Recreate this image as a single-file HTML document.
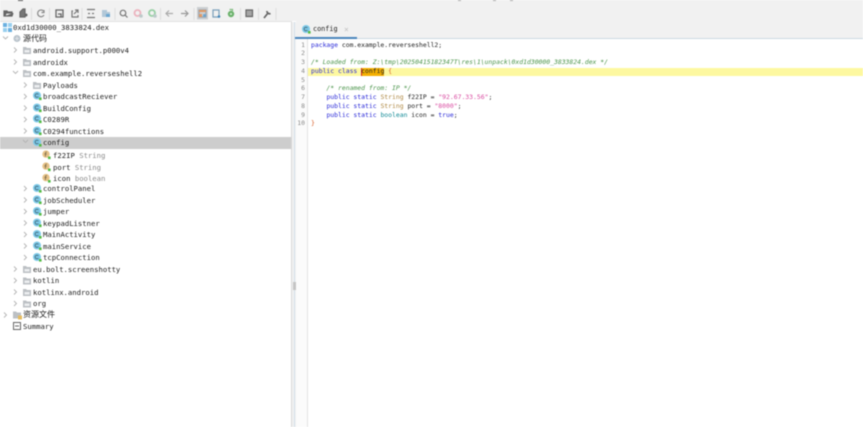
<!DOCTYPE html>
<html><head><meta charset="utf-8"><style>
html,body{margin:0;padding:0;background:#fff}
#p{position:relative;width:863px;height:427px;overflow:hidden;background:#fff;filter:blur(.5px)}
.a{position:absolute}
.t{position:absolute;font:7.25px/11px "DejaVu Sans Mono","Liberation Mono","Noto Sans CJK SC",monospace;color:#222;white-space:pre}
.t i{font-style:normal;color:#8a8a8a}
.c{position:absolute;font:6.42px/8.8px "DejaVu Sans Mono","Liberation Mono",monospace;color:#222;white-space:pre;left:311px}
.n{position:absolute;font:6.4px/8.8px "DejaVu Sans Mono",monospace;color:#888;width:11px;text-align:right;left:294px}
b{font-weight:normal;color:#2a2ad8}
.g{color:#4a944a;font-style:italic}.y{color:#b08a45}.s{color:#d94aa0}.k{color:#128a96}
svg{position:absolute;overflow:visible}
</style></head><body><div id="p">
<div class="a" style="left:0;top:0;width:863px;height:21px;background:#f1f1f1"></div>
<div class="a" style="left:0;top:21px;width:292px;height:1px;background:#e2e2e2"></div>
<div class="a" style="left:0;top:22px;width:291px;height:405px;background:#fff"></div>
<div class="a" style="left:291px;top:22px;width:5px;height:405px;background:#f1f1f1"></div>
<div class="a" style="left:291px;top:22px;width:1px;height:405px;background:#d8d8d8"></div>
<div class="a" style="left:294px;top:22px;width:1px;height:405px;background:#d4e0ea"></div>
<div class="a" style="left:293px;top:282px;width:3px;height:8px;background:#c4c4c4"></div>
<div class="a" style="left:296px;top:21px;width:567px;height:17px;background:#f1f1f1"></div>
<div class="a" style="left:295px;top:37.500px;width:568px;height:1.500px;background:#ccd8e2"></div>
<div class="a" style="left:295px;top:37px;width:62px;height:2px;background:#4a86bc"></div>
<div class="a" style="left:296px;top:39px;width:11px;height:388px;background:#fbfbfb"></div>
<div class="a" style="left:307px;top:39px;width:1px;height:388px;background:#e2e2e2"></div>
<div class="a" style="left:308px;top:67.500px;width:555px;height:8.800px;background:#fdf8a0"></div>
<div class="a" style="left:0;top:137px;width:291px;height:12px;background:#cdcdcd"></div>
<div class="a" style="left:361px;top:67.500px;width:23px;height:8.800px;background:#f5b000"></div>
<div class="a" style="left:361px;top:67.500px;width:1px;height:8.800px;background:#d42020"></div>
<div class="a" style="left:18px;top:0;width:5px;height:1px;background:#555"></div>
<div class="a" style="left:458px;top:0;width:3px;height:1px;background:#aaa"></div>
<div class="a" style="left:493px;top:0;width:3px;height:1px;background:#aaa"></div>
<div class="a" style="left:510px;top:0;width:3px;height:1px;background:#aaa"></div>

<svg width="290" height="21" style="left:0;top:0" fill="none" stroke="#666" stroke-width="1.200">
<path d="M4 16V11h3l1 1h4v1H6l-1 3zM5 16h7l1-3" fill="#666"/>
<path d="M20 17v-5l3-3h2v8z" fill="#777"/><circle cx="26" cy="15" r="1.500" fill="#666" stroke="none"/>
<path d="M43.500 11a3.400 3.400 0 1 0 .5 4M44 10v2.500h-2.500" stroke="#888"/>
<path d="M56 10h7v7h-7zM58 14h3v3" stroke-width="1.300"/>
<path d="M73 11h-1v6h6v-2M75 10h3v3M78 10l-4 4" stroke="#777"/>
<path d="M87 9.500h8M87 17.500h8M88 13.500h2M92 13.500h2" stroke="#777"/>
<path d="M102 10h5v2h3v5h-8z" fill="#b2c8d8" stroke="none"/><path d="M106 14h4v3h-4z" fill="#6ca6d0" stroke="none"/>
<circle cx="123" cy="13" r="2.800" stroke="#777"/><path d="M125 15l2.500 2.500" stroke="#777"/>
<circle cx="137.500" cy="13" r="3" stroke="#ecb3be" stroke-width="1.800"/><circle cx="141" cy="16" r="1.800" fill="#bccaca" stroke="none"/>
<circle cx="152" cy="13" r="3" stroke="#98d0a5" stroke-width="1.800"/><circle cx="155" cy="16" r="1.800" fill="#bccaca" stroke="none"/>
<path d="M166 13.500h7M169 10.500l-3 3 3 3" stroke="#aaa"/><path d="M181 13.500h7M185 10.500l3 3-3 3" stroke="#999"/>
<rect x="197" y="7" width="11" height="12.500" fill="#cbced1" stroke="none"/>
<path d="M199 10h7v7h-7z" stroke="#98a4af"/><path d="M199 10h7v2h-7z" fill="#e09a66" stroke="none"/><path d="M199 14h3v3h-3z" fill="#e09a66" stroke="none"/><circle cx="204.500" cy="15.500" r="1.500" fill="#6ca6d0" stroke="none"/>
<path d="M213 10h6v7h-6z" stroke="#7ba0bb"/><circle cx="219" cy="16.500" r="1.300" fill="#3f84b8" stroke="none"/>
<path d="M229.500 9.500h3v1.500" stroke="#80bc80"/><circle cx="231" cy="14" r="3.200" fill="#6cb26c" stroke="none"/><circle cx="231" cy="14" r="1" fill="#d8ecd8" stroke="none"/>
<path d="M246 10h6.500v6.500H246z" fill="#a5a5a5" stroke="#666"/>
<path d="M264 18l4-5M267 11a2.500 2.500 0 0 0 3.500 2.500" stroke="#666" stroke-width="1.700"/>
<path d="M31.500 8v12M49.500 8v12M82 8v12M115 8v12M160.500 8v12M194 8v12M240.500 8v12M258.500 8v12M276 8v12" stroke="#dcdcdc" stroke-width="1"/>
</svg>

<svg width="292" height="340" style="left:0;top:21px" fill="none">
<defs>
<g id="f"><path d="M0 1h3l1 1h4v6H0z" fill="#bcc0c4"/><path d="M1.500 4h5v2.500h-5z" fill="#eceef0"/></g>
<g id="k"><circle cx="4" cy="4" r="4" fill="#7ecae8"/><path d="M5.400 2.900a1.800 1.800 0 1 0 0 2.200" stroke="#4a7388" stroke-width="1"/><rect x="6" y="6" width="2.600" height="2.600" fill="#55bb45"/></g>
<g id="v"><circle cx="4" cy="3.600" r="3.700" fill="#e6c288"/><path d="M4.800 1.500q-1.400 0-1.400 1.500v3M2.500 3.500h2.300" stroke="#7a6a4a" stroke-width=".8"/><rect x="6" y="6" width="2.600" height="2.600" fill="#55bb45"/></g>
<path id="r" d="M0 0l2.500 2.500L0 5" stroke="#b4b4b4" stroke-width=".9"/>
<path id="o" d="M0 0l2.500 2.500L5 0" stroke="#b4b4b4" stroke-width=".9"/>
</defs>
<g transform="translate(3,2)"><path d="M0 0h4v4H0z" fill="#6ab0e0"/><path d="M5 0h4v4H5z" fill="#98cfee"/><path d="M0 5h4v4H0z" fill="#98cfee"/><path d="M5 5h4v4H5z" fill="#6ab0e0"/></g>
<use href="#o" x="3" y="15.500"/><g transform="translate(13,13.500)"><circle cx="4" cy="4" r="3.500" fill="#bac4cc"/><path d="M2 4h4M4 2v4" stroke="#e6e8ea" stroke-width=".8"/></g>
<use href="#r" x="14" y="26.500"/><use href="#f" x="23" y="25"/>
<use href="#r" x="14" y="38.500"/><use href="#f" x="23" y="37"/>
<use href="#o" x="13" y="50"/><use href="#f" x="23" y="48"/>
<use href="#r" x="24" y="61.500"/><use href="#f" x="33" y="60"/>
<use href="#r" x="24" y="73"/><use href="#k" x="33" y="70.500"/>
<use href="#r" x="24" y="84.500"/><use href="#k" x="33" y="82.500"/>
<use href="#r" x="24" y="96"/><use href="#k" x="33" y="93.500"/>
<use href="#r" x="24" y="107.500"/><use href="#k" x="33" y="105.500"/>
<use href="#o" x="23" y="119"/><use href="#k" x="33" y="117"/>
<use href="#v" x="42" y="129.500"/><use href="#v" x="42" y="141.500"/><use href="#v" x="42" y="153"/>
<use href="#r" x="24" y="165"/><use href="#k" x="33" y="163"/>
<use href="#r" x="24" y="176.500"/><use href="#k" x="33" y="174.500"/>
<use href="#r" x="24" y="188"/><use href="#k" x="33" y="186"/>
<use href="#r" x="24" y="199.500"/><use href="#k" x="33" y="197.500"/>
<use href="#r" x="24" y="211"/><use href="#k" x="33" y="209"/>
<use href="#r" x="24" y="222.500"/><use href="#k" x="33" y="220.500"/>
<use href="#r" x="24" y="234"/><use href="#k" x="33" y="232"/>
<use href="#r" x="14" y="245.500"/><use href="#f" x="23" y="244"/>
<use href="#r" x="14" y="257"/><use href="#f" x="23" y="255.500"/>
<use href="#r" x="14" y="268.500"/><use href="#f" x="23" y="267"/>
<use href="#r" x="14" y="280"/><use href="#f" x="23" y="278.500"/>
<use href="#r" x="4" y="291.500"/><g transform="translate(13,289.500)"><path d="M0 1h3l1 1h4v6H0z" fill="#bcc0c4"/><rect x="5" y="5" width="4" height="4" fill="#e6bc60"/></g>
<g transform="translate(13,301)"><rect x=".5" y=".5" width="7" height="7" stroke="#666"/><path d="M2 4h4" stroke="#666"/></g>
</svg>

<div class="t" style="left:13px;top:22px">0xd1d30000_3833824.dex</div>
<div class="t" style="left:23px;top:33px;font-family:'Noto Sans CJK SC',sans-serif;font-size:8px">源代码</div>
<div class="t" style="left:33px;top:45px">android.support.p000v4</div>
<div class="t" style="left:33px;top:56.500px">androidx</div>
<div class="t" style="left:33px;top:68px">com.example.reverseshell2</div>
<div class="t" style="left:43px;top:79.500px">Payloads</div>
<div class="t" style="left:43px;top:91px">broadcastReciever</div>
<div class="t" style="left:43px;top:102.500px">BuildConfig</div>
<div class="t" style="left:43px;top:114px">C0289R</div>
<div class="t" style="left:43px;top:125.500px">C0294functions</div>
<div class="t" style="left:43px;top:137px">config</div>
<div class="t" style="left:53px;top:150px">f22IP <i>String</i></div>
<div class="t" style="left:53px;top:161.500px">port <i>String</i></div>
<div class="t" style="left:53px;top:173px">icon <i>boolean</i></div>
<div class="t" style="left:43px;top:183px">controlPanel</div>
<div class="t" style="left:43px;top:194.500px">jobScheduler</div>
<div class="t" style="left:43px;top:206px">jumper</div>
<div class="t" style="left:43px;top:217.500px">keypadListner</div>
<div class="t" style="left:43px;top:229px">MainActivity</div>
<div class="t" style="left:43px;top:240.500px">mainService</div>
<div class="t" style="left:43px;top:252px">tcpConnection</div>
<div class="t" style="left:33px;top:263.500px">eu.bolt.screenshotty</div>
<div class="t" style="left:33px;top:275px">kotlin</div>
<div class="t" style="left:33px;top:286.500px">kotlinx.android</div>
<div class="t" style="left:33px;top:298px">org</div>
<div class="t" style="left:23px;top:309px;font-family:'Noto Sans CJK SC',sans-serif;font-size:8px">资源文件</div>
<div class="t" style="left:23px;top:321px">Summary</div>

<svg width="9" height="9" style="left:302px;top:25px" fill="none"><use href="#k"/></svg>
<div class="t" style="left:313px;top:24px;font-size:6.800px;color:#222">config</div>
<div class="t" style="left:344px;top:24px;color:#c4c4c4;font-size:8px">×</div>

<div class="n" style="top:40.700px">1</div><div class="n" style="top:49.400px">2</div><div class="n" style="top:58.200px">3</div><div class="n" style="top:66.900px">4</div><div class="n" style="top:75.600px">5</div><div class="n" style="top:84.400px">6</div><div class="n" style="top:93.100px">7</div><div class="n" style="top:101.800px">8</div><div class="n" style="top:110.600px">9</div><div class="n" style="top:119.300px">10</div>

<div class="c" style="top:40.700px"><b>package</b> com.example.reverseshell2;</div>
<div class="c g" style="top:58.200px;color:#4a944a">/* Loaded from: Z:\tmp\20250415182347T\res\1\unpack\0xd1d30000_3833824.dex */</div>
<div class="c" style="top:66.900px"><b>public class</b> config <span style="color:#d9602a">{</span></div>
<div class="c g" style="top:84.400px;color:#4a944a">    /* renamed from: IP */</div>
<div class="c" style="top:93.100px">    <b>public static</b> <span class="y">String</span> f22IP = <span class="s">"92.67.33.56"</span>;</div>
<div class="c" style="top:101.800px">    <b>public static</b> <span class="y">String</span> port = <span class="s">"8000"</span>;</div>
<div class="c" style="top:110.600px">    <b>public static</b> <span class="k">boolean</span> icon = <b>true</b>;</div>
<div class="c" style="top:119.300px;color:#d9602a">}</div>
</div></body></html>
